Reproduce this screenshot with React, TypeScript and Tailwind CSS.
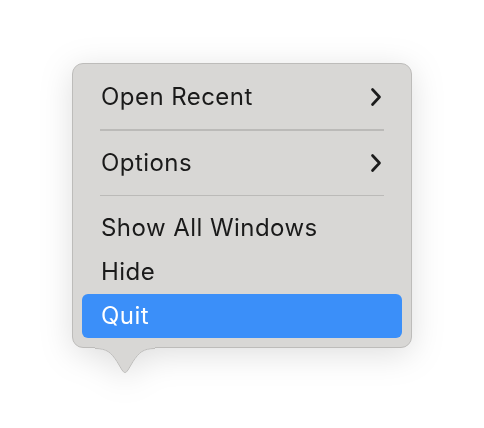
import React from "react";

const Chevron = () => (
  <svg width="12" height="20" viewBox="0 0 12 20" fill="none">
    <path d="M2.5 2.5 L9.5 10 L2.5 17.5" stroke="#1c1c1c" strokeWidth="2.7" strokeLinecap="round" strokeLinejoin="round" />
  </svg>
);

const Row = ({ label, sub, active }: { label: string; sub?: boolean; active?: boolean }) => (
  <div
    className={`flex h-[44px] items-center justify-between rounded-[6px] pl-[19px] pr-[20px] ${
      active ? "bg-[#3b8ff9] text-white" : "text-[#1a1a1a]"
    }`}
  >
    <span className="text-[24px] leading-none tracking-[0.45px]">{label}</span>
    {sub && <Chevron />}
  </div>
);

const Sep = () => (
  <div className="px-[18px] py-[10px]">
    <div className="h-[1.5px] bg-[#bbbab8]" />
  </div>
);

export default function App() {
  return (
    <div className="h-[428px] w-[484px] bg-white" style={{ fontFamily: "Inter, 'Noto Sans', sans-serif" }}>
      <div className="pl-[72px] pt-[63px]">
        <div className="relative w-[340px] drop-shadow-[0_6px_16px_rgba(0,0,0,0.13)]">
          <div className="rounded-[11px] border border-[#bdbcba] bg-[#d8d7d5] px-[9px] pb-[9px] pt-[11px]">
            <Row label="Open Recent" sub />
            <Sep />
            <Row label="Options" sub />
            <Sep />
            <Row label="Show All Windows" />
            <Row label="Hide" />
            <Row label="Quit" active />
          </div>
          <svg
            className="absolute left-[23px] top-[calc(100%-2px)]"
            width="60"
            height="28"
            viewBox="0 0 60 28"
          >
            <path
              d="M0 0 L0 2 C12 2 16 6 22 15 L27 23.5 Q30 28.5 33 23.5 L38 15 C44 6 48 2 60 2 L60 0 Z"
              fill="#d8d7d5"
            />
            <path
              d="M0 2.5 C12 2.5 16 6.5 22 15.5 L27 24 Q30 29 33 24 L38 15.5 C44 6.5 48 2.5 60 2.5"
              fill="none"
              stroke="#bdbcba"
              strokeWidth="1"
            />
          </svg>
        </div>
      </div>
    </div>
  );
}
